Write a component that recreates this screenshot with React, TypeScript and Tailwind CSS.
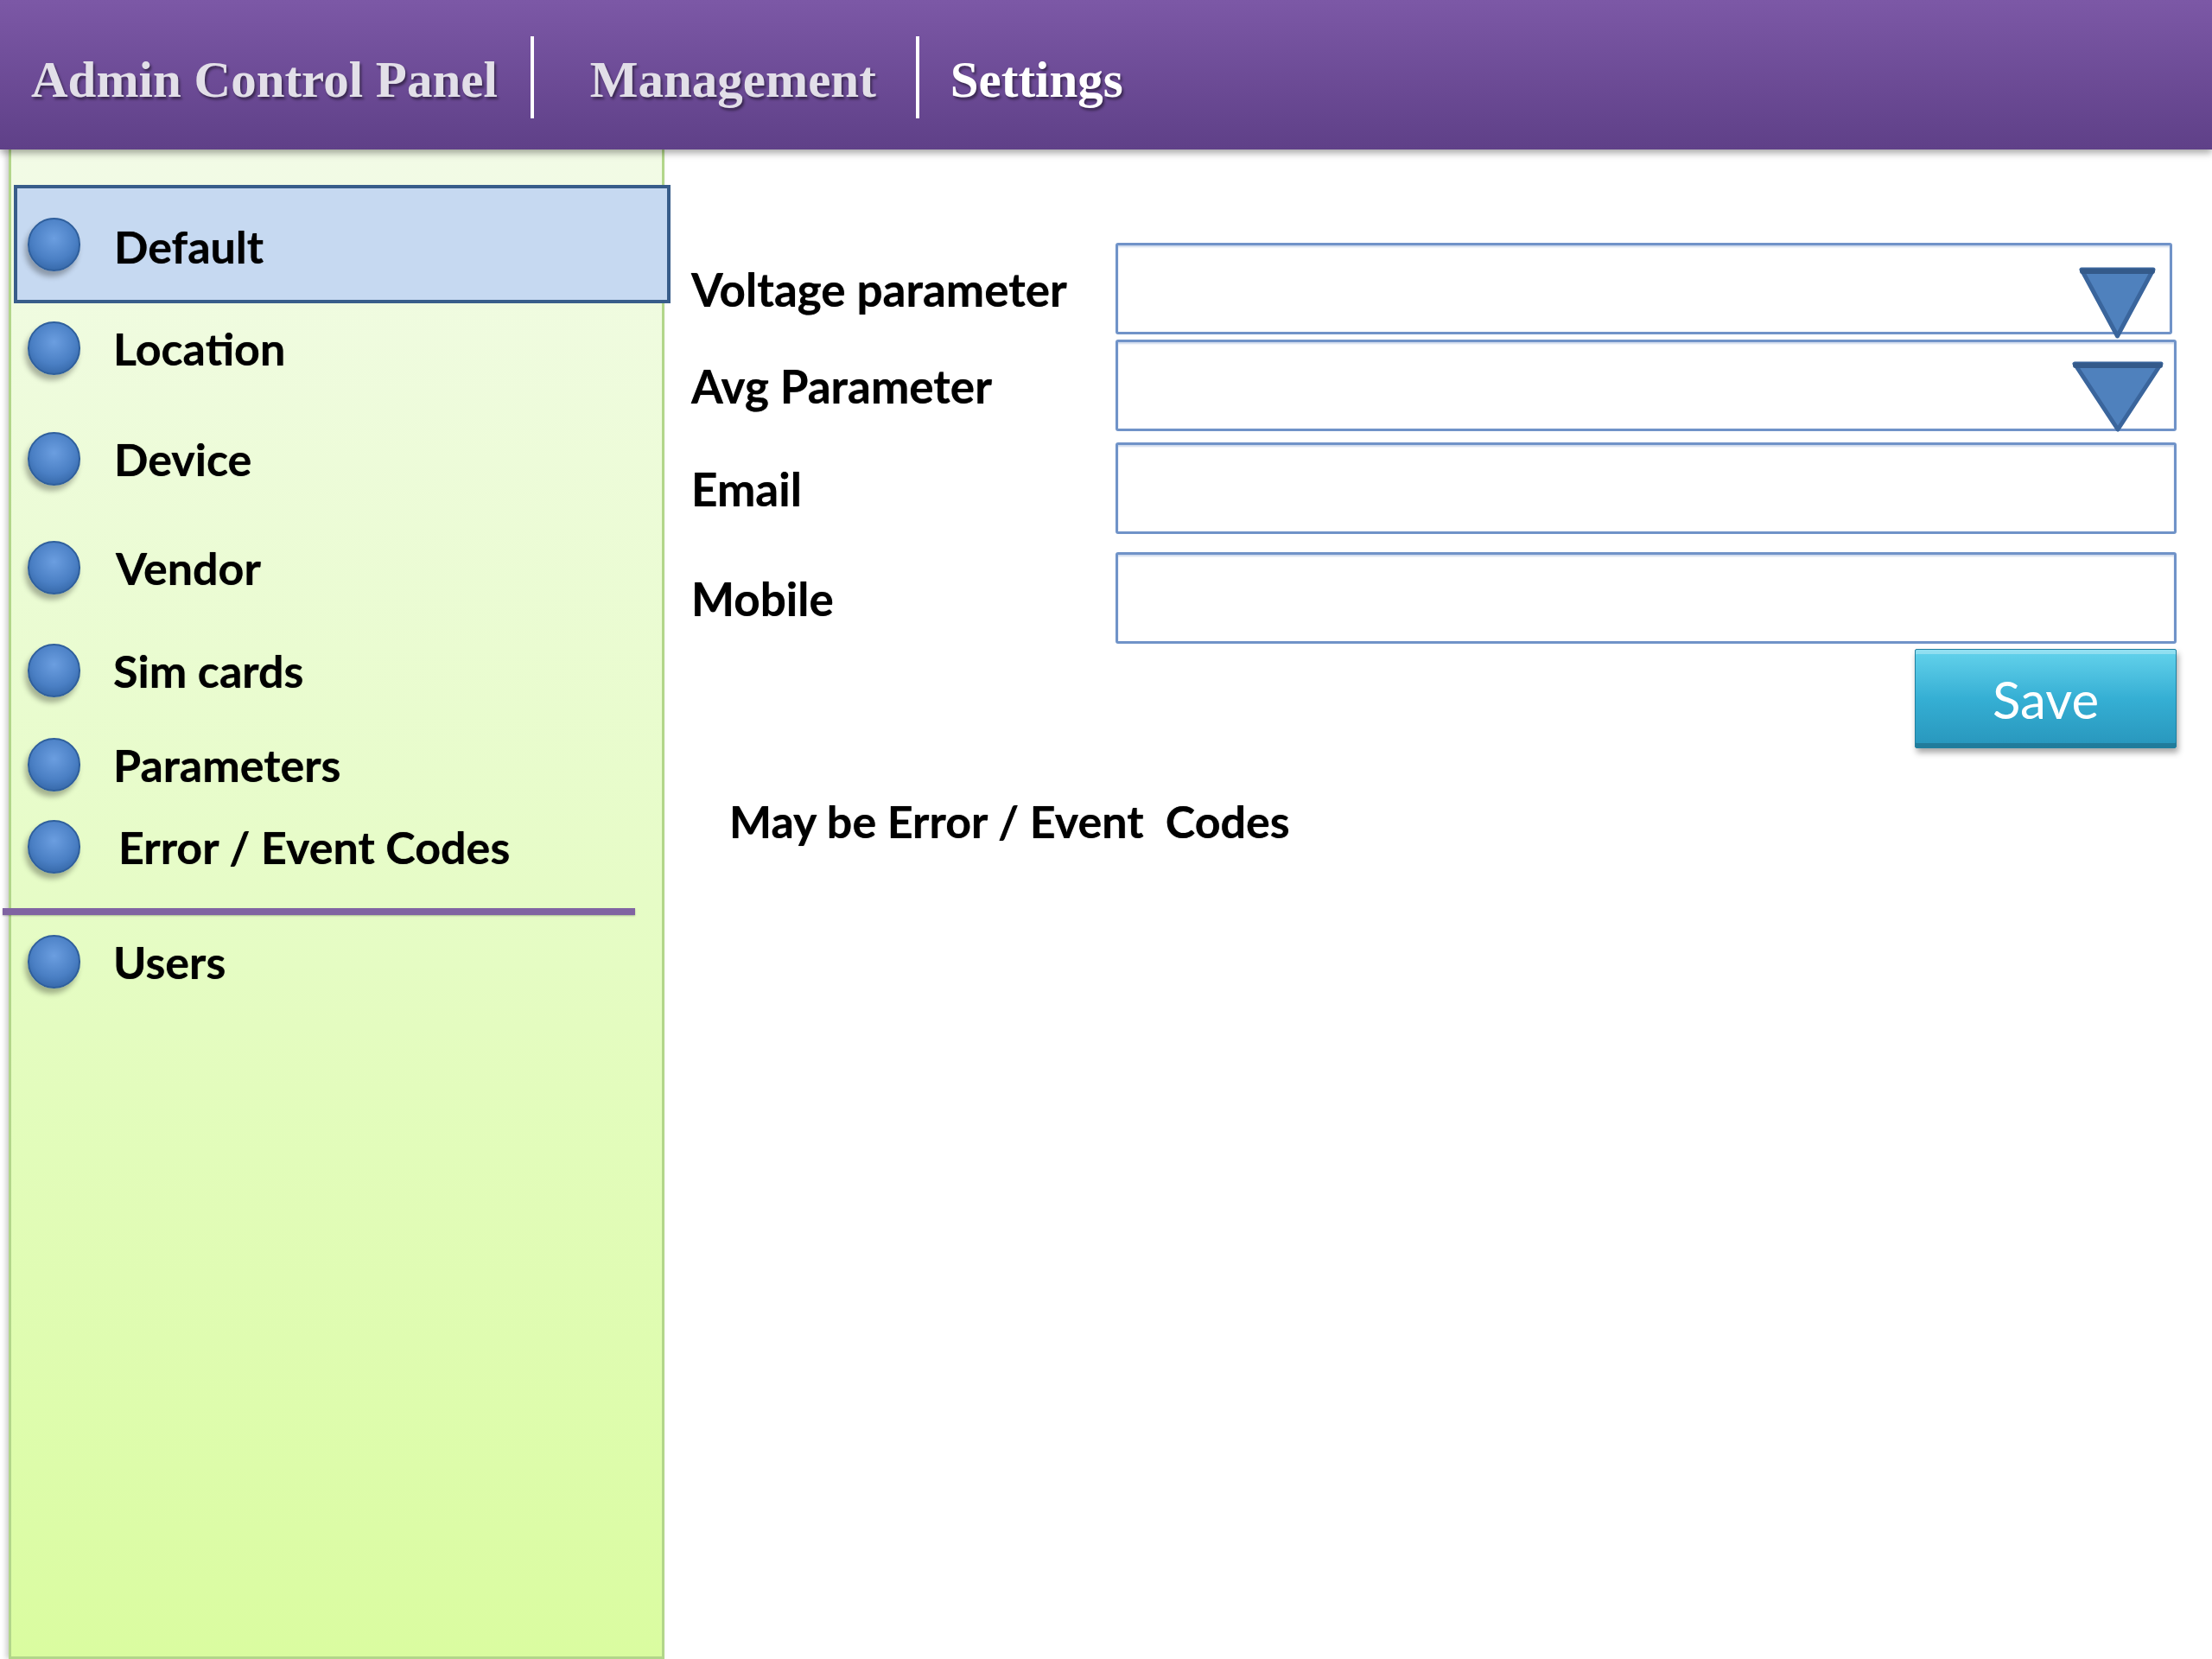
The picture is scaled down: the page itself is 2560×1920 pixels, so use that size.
import React from "react"

const sideFont = { fontFamily: "Lato, 'Open Sans', sans-serif" }

function Bullet() {
  return (
    <div className="w-[61px] h-[62px] shrink-0 rounded-full border-[2px] border-[#2f5f9c] bg-[radial-gradient(circle_at_50%_38%,#6b9ee0_0%,#4a7fc4_55%,#3466a6_85%,#2a5590_100%)] shadow-[-3px_6px_6px_rgba(0,0,0,0.3)]" />
  )
}

function NavRow({ label, mt, textOffset = 0 }: { label: string; mt: string; textOffset?: number }) {
  return (
    <div className={`flex items-center h-[80px] pl-[19px] ${mt}`}>
      <Bullet />
      <span
        className="text-[52px] font-bold leading-none text-black [text-shadow:0_0_1px_rgba(0,0,0,0.7)]"
        style={{ ...sideFont, marginLeft: 38 + textOffset }}
      >
        {label}
      </span>
    </div>
  )
}

function Triangle({ w, h }: { w: number; h: number }) {
  return (
    <svg width={w} height={h} viewBox={`0 0 ${w} ${h}`}>
      <polygon
        points={`4,4 ${w - 4},4 ${w / 2},${h - 3}`}
        fill="#4f81bd"
        stroke="#3a659c"
        strokeWidth="5"
        strokeLinejoin="round"
      />
      <line x1="5" y1="6" x2={w - 5} y2="6" stroke="#345a8a" strokeWidth="6" strokeLinecap="round" />
    </svg>
  )
}

function Field({
  label,
  mt,
  width,
  triangle,
}: {
  label: string
  mt: string
  width: string
  triangle?: { left: string; top: string; w: number; h: number }
}) {
  return (
    <div className={`flex items-center ${mt}`}>
      <div
        className="w-[491px] shrink-0 text-[53px] font-bold leading-none text-black [text-shadow:0_0_1px_rgba(0,0,0,0.7)]"
        style={sideFont}
      >
        {label}
      </div>
      <div
        className={`relative h-[106px] ${width} rounded-[3px] border-[3px] border-[#7093c8] bg-white shadow-[inset_0_2px_2px_rgba(112,147,200,0.35)]`}
      >
        {triangle && (
          <div className={`absolute ${triangle.left} ${triangle.top}`}>
            <Triangle w={triangle.w} h={triangle.h} />
          </div>
        )}
      </div>
    </div>
  )
}

export default function App() {
  return (
    <div className="w-[2560px] min-h-[1920px] bg-white flex flex-col overflow-hidden">
      {/* Top bar */}
      <header className="relative z-10 h-[173px] shrink-0 flex items-center pl-[36px] pt-[12px] bg-gradient-to-b from-[#7c58a6] to-[#5f4088] shadow-[0_4px_8px_rgba(0,0,0,0.35)]">
        <span
          className="text-[59px] font-bold leading-none text-[#e2dfe8] [text-shadow:2px_3px_3px_rgba(0,0,0,0.45)]"
          style={{ fontFamily: "'Liberation Serif', serif" }}
        >
          Admin Control Panel
        </span>
        <div className="ml-[38px] w-[4px] h-[95px] -mt-[6px] bg-white" />
        <span
          className="ml-[65px] text-[59px] font-bold leading-none text-[#e2dfe8] [text-shadow:2px_3px_3px_rgba(0,0,0,0.45)]"
          style={{ fontFamily: "'Liberation Serif', serif" }}
        >
          Management
        </span>
        <div className="ml-[46px] w-[4px] h-[95px] -mt-[6px] bg-white" />
        <span
          className="ml-[36px] text-[59px] font-bold leading-none text-white [text-shadow:2px_3px_3px_rgba(0,0,0,0.45)]"
          style={{ fontFamily: "'Liberation Serif', serif" }}
        >
          Settings
        </span>
      </header>

      <div className="flex flex-1">
        {/* Sidebar */}
        <aside className="ml-[10px] w-[759px] shrink-0 border-x-[3px] border-b-[3px] border-[#b2d68a] bg-gradient-to-b from-[#f2fbe6] via-[#e6fcc6] to-[#dafca0] shadow-[-3px_0_6px_rgba(0,0,0,0.2)] pt-[41px] pb-[20px]">
          <div className="ml-[3px] w-[760px] h-[137px] flex items-center pl-[12px] border-[4px] border-[#385d8a] bg-[#c6d9f1]">
            <Bullet />
            <span
              className="ml-[39px] mt-[4px] text-[52px] font-bold leading-none text-black [text-shadow:0_0_1px_rgba(0,0,0,0.7)]"
              style={sideFont}
            >
              Default
            </span>
          </div>
          <NavRow label="Location" mt="mt-[12px]" />
          <NavRow label="Device" mt="mt-[48px]" textOffset={1} />
          <NavRow label="Vendor" mt="mt-[46px]" textOffset={3} />
          <NavRow label="Sim cards" mt="mt-[39px]" />
          <NavRow label="Parameters" mt="mt-[29px]" />
          <NavRow label="Error / Event Codes" mt="mt-[15px]" textOffset={6} />
          <div className="mt-[31px] -ml-[10px] w-[732px] h-[8px] bg-[#8064a2] shadow-[0_1px_2px_rgba(0,0,0,0.25)]" />
          <NavRow label="Users" mt="mt-[14px]" />
        </aside>

        {/* Main form */}
        <main className="flex-1 pl-[31px] pr-[42px] pt-[108px]">
          <Field
            label="Voltage parameter"
            mt="mt-0"
            width="w-[1223px]"
            triangle={{ left: "left-[1111px]", top: "top-[24px]", w: 91, h: 84 }}
          />
          <Field
            label="Avg Parameter"
            mt="mt-[6px]"
            width="w-[1228px]"
            triangle={{ left: "left-[1103px]", top: "top-[21px]", w: 108, h: 83 }}
          />
          <Field label="Email" mt="mt-[13px]" width="w-[1228px]" />
          <Field label="Mobile" mt="mt-[21px]" width="w-[1228px]" />

          <div className="flex justify-end mt-[6px]">
            <button
              type="button"
              className="w-[303px] h-[115px] flex items-center justify-center rounded-[2px] border border-[#1f7f9f] bg-gradient-to-b from-[#63d3ec] via-[#35afd4] to-[#2896bc] text-[60px] leading-none text-white shadow-[inset_0_5px_0_rgba(255,255,255,0.3),inset_0_-5px_0_rgba(0,0,0,0.18),2px_5px_7px_rgba(0,0,0,0.35)]"
              style={sideFont}
            >
              Save
            </button>
          </div>

          <div
            className="mt-[58px] ml-[44px] text-[52px] font-bold leading-none text-black whitespace-pre [text-shadow:0_0_1px_rgba(0,0,0,0.7)]"
            style={sideFont}
          >
            May be Error / Event  Codes
          </div>
        </main>
      </div>
    </div>
  )
}
